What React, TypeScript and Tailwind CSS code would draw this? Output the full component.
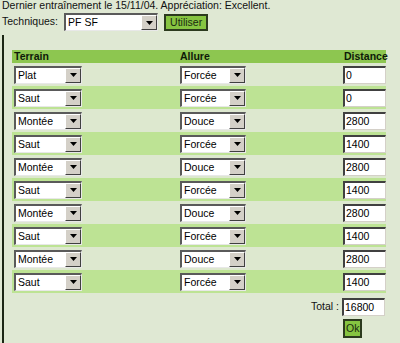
import React from "react";

interface Row {
  terrain: string;
  allure: string;
  distance: string;
}

const rows: Row[] = [
  { terrain: "Plat", allure: "Forcée", distance: "0" },
  { terrain: "Saut", allure: "Forcée", distance: "0" },
  { terrain: "Montée", allure: "Douce", distance: "2800" },
  { terrain: "Saut", allure: "Forcée", distance: "1400" },
  { terrain: "Montée", allure: "Douce", distance: "2800" },
  { terrain: "Saut", allure: "Forcée", distance: "1400" },
  { terrain: "Montée", allure: "Douce", distance: "2800" },
  { terrain: "Saut", allure: "Forcée", distance: "1400" },
  { terrain: "Montée", allure: "Douce", distance: "2800" },
  { terrain: "Saut", allure: "Forcée", distance: "1400" },
];

// old-school windows select box
function Select({ value, width }: { value: string; width: string }) {
  return (
    <div
      className={`${width} h-[18px] flex bg-white border-t-2 border-l-2 border-b border-r border-t-[#5a5a5a] border-l-[#5a5a5a] border-b-[#e8e8e8] border-r-[#e8e8e8]`}
    >
      <div className="flex-1 pl-[2px] leading-[15px] text-black truncate">{value}</div>
      <div className="w-[16px] h-[15px] bg-[#d4d0c8] border border-t-white border-l-white border-r-[#404040] border-b-[#404040] flex items-center justify-center">
        <svg width="7" height="4" viewBox="0 0 7 4">
          <path d="M0 0h7L3.5 4z" fill="#000" />
        </svg>
      </div>
    </div>
  );
}

function Input({ value }: { value: string }) {
  return (
    <div className="w-[43px] h-[18px] bg-white border-t-2 border-l-2 border-b border-r border-t-[#404040] border-l-[#404040] border-b-[#d4d0c8] border-r-[#d4d0c8] pl-[1px] leading-[15px] text-black">
      {value}
    </div>
  );
}

export default function App() {
  return (
    <div className="w-[400px] h-[343px] overflow-hidden bg-[#dfe8d3] text-[10.5px] text-[#111] font-['Liberation_Sans',Arial,sans-serif] flex flex-col">
      <div className="pl-[2px] h-[12px] leading-[11px]">
        Dernier entraînement le 15/11/04. Appréciation: Excellent.
      </div>
      <div className="flex items-center h-[20px] pl-[2px]">
        <span className="mr-[6px]">Techniques:</span>
        <Select value="PF SF" width="w-[94px]" />
        <div className="ml-[6px] h-[17px] px-[4px] bg-[#86c441] border-2 border-[#2c3a1e] leading-[13px] text-[#1a2a10]">
          Utiliser
        </div>
      </div>

      <div className="flex-1 ml-[2px] mt-[3px] border-l-2 border-[#1c2614] pl-[8px] pt-[15px]">
        <div className="w-[374px]">
          <div className="grid grid-cols-[166px_163px_45px] h-[13px] bg-[#8dc650] font-bold text-[#0e1a08] leading-[13px]">
            <div className="pl-[2px]">Terrain</div>
            <div className="pl-[2px]">Allure</div>
            <div className="pl-[3px]">Distance</div>
          </div>
          {rows.map((r, i) => (
            <div
              key={i}
              className={`grid grid-cols-[166px_163px_45px] h-[23px] items-center ${
                i % 2 === 1 ? "bg-[#bde394]" : "bg-[#dde8cf]"
              }`}
            >
              <div className="pl-[2px]">
                <Select value={r.terrain} width="w-[68px]" />
              </div>
              <div className="pl-[2px]">
                <Select value={r.allure} width="w-[66px]" />
              </div>
              <div className="pl-[2px]">
                <Input value={r.distance} />
              </div>
            </div>
          ))}
          <div className="flex justify-end items-center h-[23px] mt-[2px] pr-[1px]">
            <span className="mr-[3px]">Total :</span>
            <Input value="16800" />
          </div>
          <div className="flex h-[20px] mt-[1px] pl-[331px]">
            <div className="h-[19px] px-[1px] bg-[#86c441] border-2 border-[#2c3a1e] leading-[15px] text-[#1a2a10]">
              Ok
            </div>
          </div>
        </div>
      </div>
    </div>
  );
}
